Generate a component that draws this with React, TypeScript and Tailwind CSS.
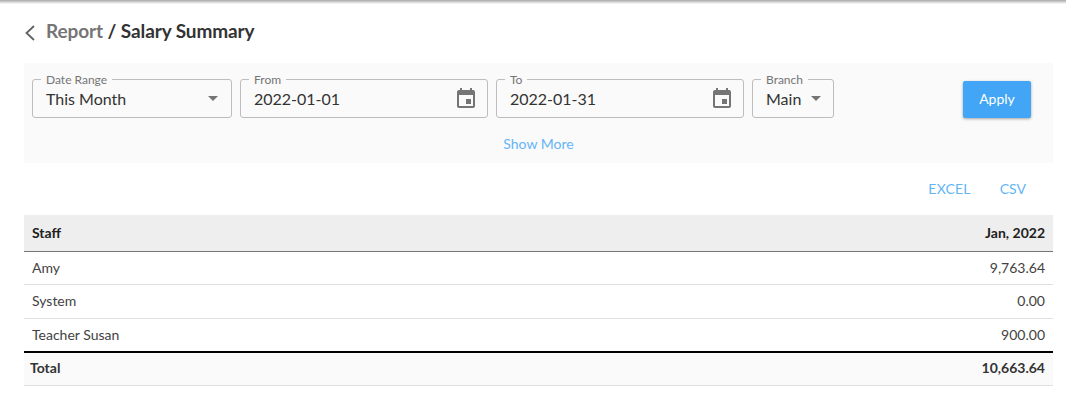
import React from "react";

function Calendar() {
  return (
    <svg viewBox="0 0 24 24" className="w-6 h-6 shrink-0" fill="#757575">
      <path d="M17 12h-5v5h5v-5zM16 1v2H8V1H6v2H5c-1.11 0-1.99.9-1.99 2L3 19c0 1.1.89 2 2 2h14c1.1 0 2-.9 2-2V5c0-1.1-.9-2-2-2h-1V1h-2zm3 18H5V8h14v11z" />
    </svg>
  );
}

function Caret() {
  return (
    <svg viewBox="0 0 10 5" className="w-[10px] h-[5px] shrink-0" fill="#757575">
      <path d="M0 0l5 5 5-5z" />
    </svg>
  );
}

function Field({ label, value, width, kind, pr }: { label: string; value: string; width: string; kind: "select" | "date"; pr: string }) {
  return (
    <div className={`relative h-[39px] rounded-[3px] border border-[#bdbdbd] flex items-center justify-between pl-[13px] ${width} ${pr}`}>
      <span className="absolute left-[8px] top-[-8px] px-[5px] bg-[#fafafa] text-[12px] leading-[15px] text-[#757575]">{label}</span>
      <span className="text-[16px] leading-[20px] text-[#333333] pt-[1px]">{value}</span>
      {kind === "date" ? <Calendar /> : <Caret />}
    </div>
  );
}

function Row({ name, amount, height }: { name: string; amount: string; height: string }) {
  return (
    <div className={`flex items-center justify-between px-[8px] border-b border-[#e0e0e0] text-[14px] text-[#424242] ${height}`}>
      <span>{name}</span>
      <span>{amount}</span>
    </div>
  );
}

export default function App() {
  return (
    <div className="relative w-[1066px] h-[404px] overflow-hidden bg-white font-['Lato','Noto_Sans',sans-serif]">
      <div className="h-[4px] bg-gradient-to-b from-[#a8a8a8] to-white" />
      <div className="px-[24px] pr-[13px]">
        <div className="h-[59px] flex items-center gap-[10px] text-[19px] font-bold pb-[5px]">
          <svg viewBox="0 0 12 16" className="w-[12px] h-[16px] mt-[3px]" fill="none" stroke="#616161" strokeWidth="1.8">
            <path d="M10 1L2.5 8l7.5 7" />
          </svg>
          <div className="leading-[22px] tracking-[-0.1px]">
            <span className="text-[#757575]">Report</span>
            <span className="text-[#333333]"> / Salary Summary</span>
          </div>
        </div>
        <div className="h-[100px] bg-[#fafafa] pt-[16px] px-[8px]">
          <div className="flex items-start gap-[8px]">
            <Field label="Date Range" value="This Month" width="w-[200px]" kind="select" pr="pr-[13px]" />
            <Field label="From" value="2022-01-01" width="w-[248px]" kind="date" pr="pr-[9px]" />
            <Field label="To" value="2022-01-31" width="w-[248px]" kind="date" pr="pr-[9px]" />
            <Field label="Branch" value="Main" width="w-[82px]" kind="select" pr="pr-[12px]" />
            <button className="ml-[121px] mt-[2px] w-[68px] h-[37px] pb-[2px] rounded-[2px] bg-[#42a5f5] text-white text-[14px] shadow-[0_1px_3px_rgba(0,0,0,0.35)]">
              Apply
            </button>
          </div>
          <div className="mt-[17px] text-center text-[14px] leading-[18px] text-[#64b5f6]">Show More</div>
        </div>
        <div className="h-[52px] flex items-center justify-end gap-[29px] pr-[27px] pb-[2px] text-[14px] text-[#64b5f6]">
          <span className="tracking-[0.2px]">EXCEL</span>
          <span>CSV</span>
        </div>
        <div className="h-[37px] bg-[#eeeeee] border-b border-[#757575] flex items-center justify-between px-[8px] pb-[2px] text-[14px] font-bold text-[#212121]">
          <span>Staff</span>
          <span>Jan, 2022</span>
        </div>
        <Row name="Amy" amount="9,763.64" height="h-[33px] pb-[1px]" />
        <Row name="System" amount="0.00" height="h-[34px] pb-[2px]" />
        <div className="h-[32px] flex items-center justify-between px-[8px] pb-[1px] text-[14px] text-[#424242]">
          <span>Teacher Susan</span>
          <span>900.00</span>
        </div>
        <div className="h-[35px] bg-[#fafafa] border-t-2 border-b border-t-black border-b-[#e0e0e0] flex items-center justify-between pl-[6px] pr-[8px] pb-[3px] text-[14px] font-bold text-[#333333]">
          <span>Total</span>
          <span>10,663.64</span>
        </div>
      </div>
    </div>
  );
}
